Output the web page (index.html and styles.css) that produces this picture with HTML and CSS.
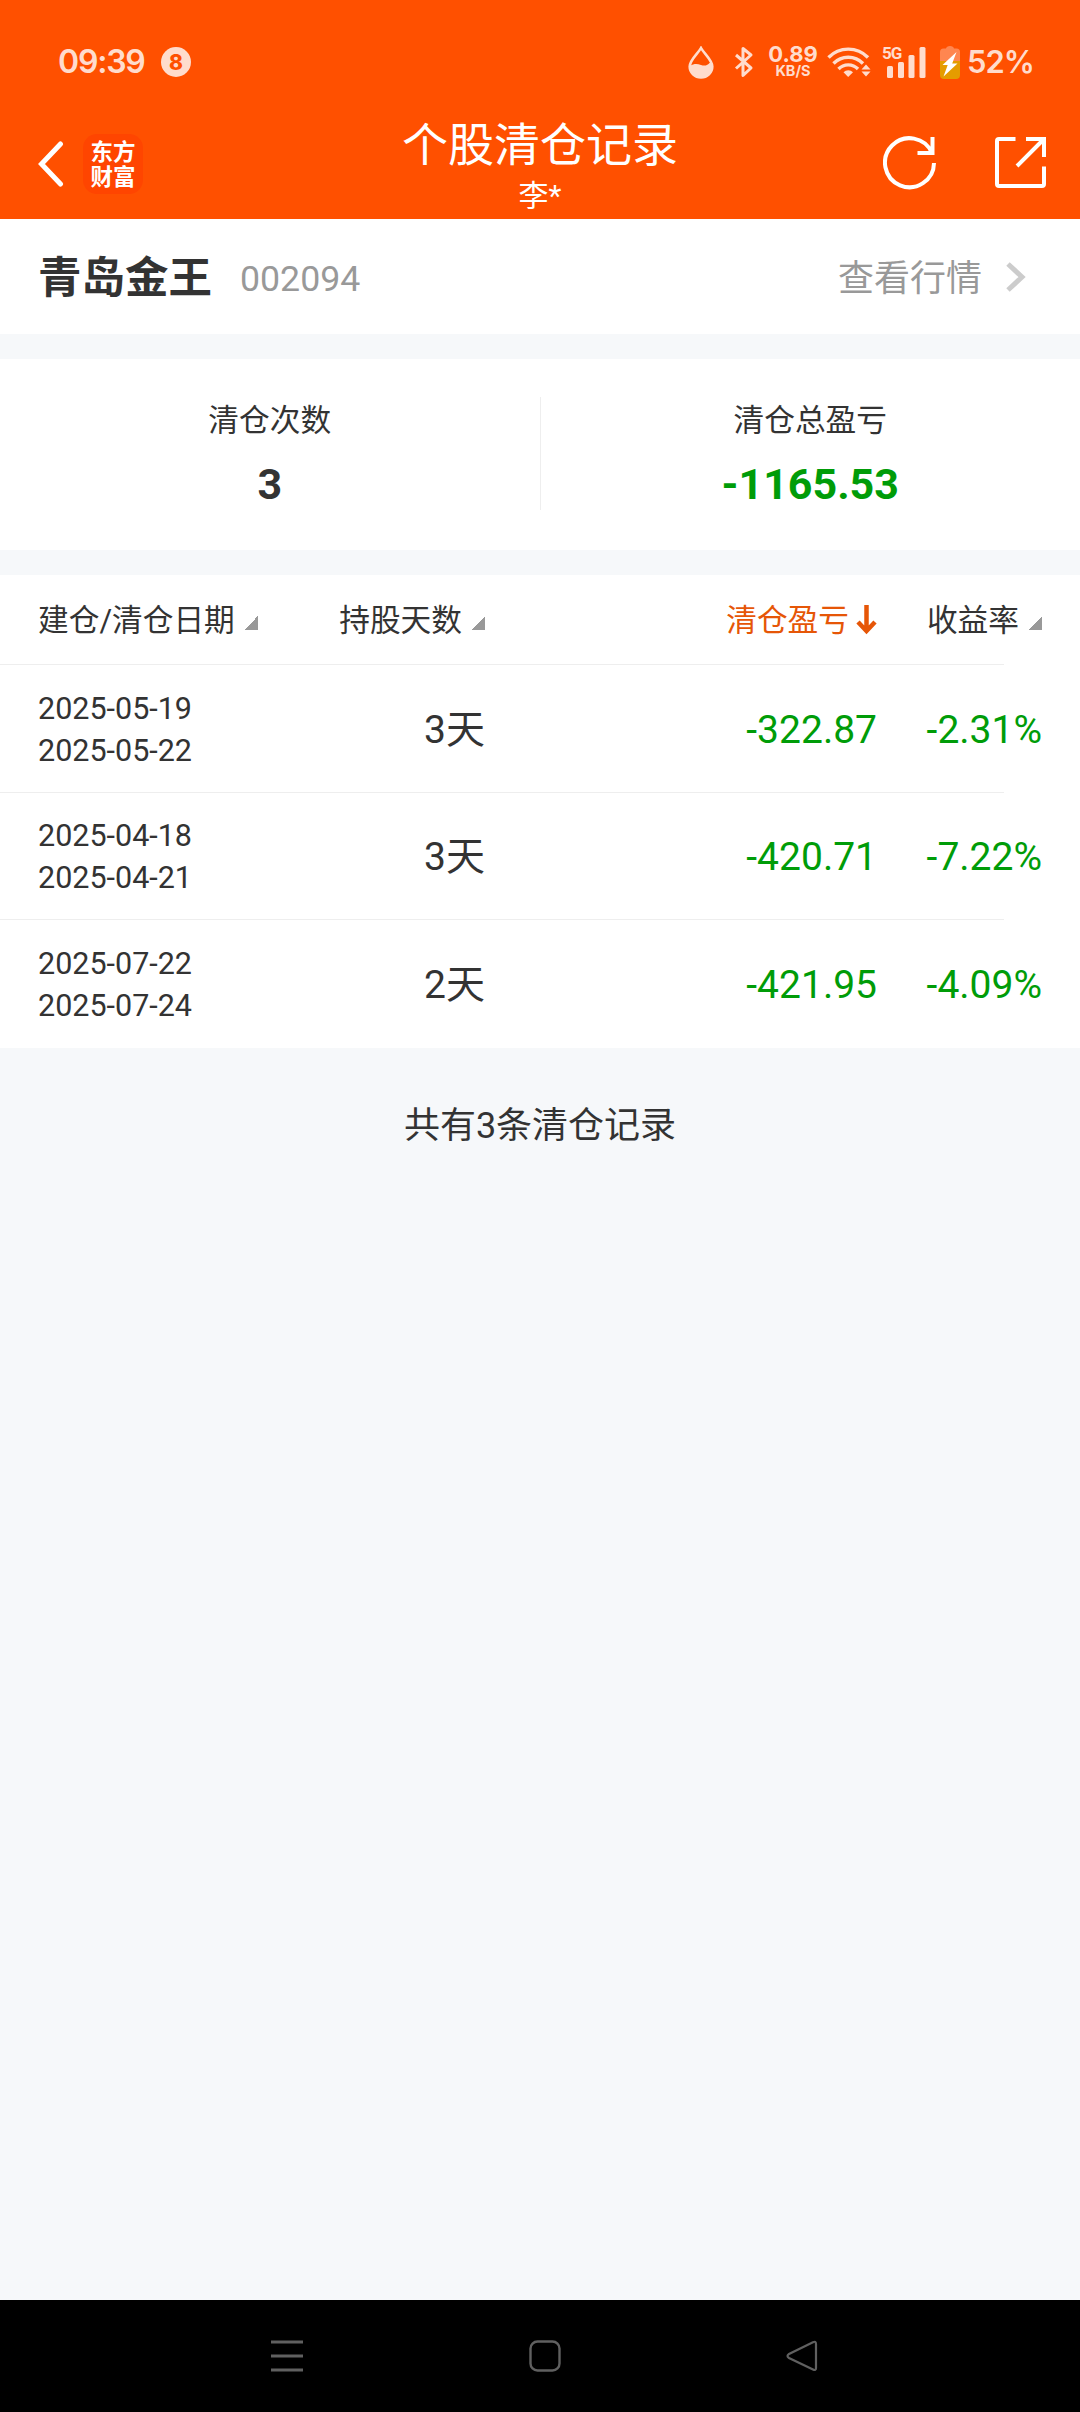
FILE: index.html
```
<!DOCTYPE html>
<html lang="zh-CN">
<head>
    <meta charset="UTF-8">
    <meta name="viewport" content="width=device-width, initial-scale=1.0">
    <title>个股清仓记录</title>
    <link rel="stylesheet" href="styles.css">
</head>
<body>
    <header class="top">
        <div class="status-bar">
            <span class="time">09:39</span>
            <span class="notice">8</span>
            <div class="status-icons">
                <svg class="icon-drop" width="26" height="33" viewBox="0 0 26 33">
                    <path d="M13 2C10 7.500 1.700 14 1.700 20.500a11.300 11 0 0 0 22.600 0C24.300 14 16 7.500 13 2z" fill="none" stroke="currentColor" stroke-width="2.600"/>
                    <path d="M2 20c4-2.500 7-2.500 11-1s7 0 8.500-2h2.800v4a11.300 11 0 0 1-22.600 0z" fill="currentColor"/>
                </svg>
                <svg class="icon-bluetooth" width="20" height="32" viewBox="0 0 20 32">
                    <path d="M2 9l15 13-8 7.500V2.500L17 9 2 22.500" fill="none" stroke="currentColor" stroke-width="3" stroke-linejoin="round"/>
                </svg>
                <div class="speed">
                    <span class="speed-num">0.89</span>
                    <span class="speed-unit">KB/S</span>
                </div>
                <svg class="icon-wifi" width="44" height="32" viewBox="0 0 44 32">
                    <g fill="none" stroke="currentColor" stroke-width="3.400">
                        <path d="M1.500 11.500a27.500 27.500 0 0 1 39.500 0"/>
                        <path d="M6.500 17.500a20.500 20.500 0 0 1 29.500 0"/>
                        <path d="M11.500 23a13.500 13.500 0 0 1 19.500 0"/>
                    </g>
                    <path d="M16.500 26.200a7 7 0 0 1 9.500 0L21.200 31z" fill="currentColor"/>
                    <path d="M34.500 23.500L39 18.500l4.500 5zM34.500 25.500h9L39 30.500z" fill="currentColor"/>
                </svg>
                <div class="signal">
                    <svg width="44" height="32" viewBox="0 0 44 32">
                        <g fill="currentColor">
                            <rect x="5" y="20" width="6" height="12" rx="1.500"/>
                            <rect x="16" y="16" width="6" height="16" rx="1.500"/>
                            <rect x="26.500" y="9" width="6" height="23" rx="1.500"/>
                            <rect x="37.500" y="1" width="6" height="31" rx="1.500"/>
                        </g>
                    </svg>
                    <span class="signal-type">5G</span>
                </div>
                <svg class="icon-battery" width="20" height="34" viewBox="0 0 20 34">
                    <path d="M6 3.500Q6.500 1 10 1t4 2.500h2.500Q20 3.500 20 7v9H0V7q0-3.500 3.500-3.500z" fill="#ff8650"/>
                    <path d="M0 16h20v14q0 4-4 4H4q-4 0-4-4z" fill="#e59c00"/>
                    <path d="M16.500 7L2.500 20h5.200L3.500 31.500 17.500 18.500h-5.300z" fill="#fff"/>
                </svg>
                <span class="battery-num">52%</span>
            </div>
        </div>
        <div class="nav-bar">
            <div class="nav-left">
                <svg class="icon-back" width="26" height="46" viewBox="0 0 26 46">
                    <path d="M22.500 3L3.500 23l19 20" fill="none" stroke="#fff" stroke-width="5" stroke-linecap="round"/>
                </svg>
                <div class="logo">东方<br>财富</div>
            </div>
            <div class="title">
                <h1>个股清仓记录</h1>
                <p>李*</p>
            </div>
            <div class="nav-right">
                <svg width="54" height="54" viewBox="0 0 54 54">
                    <path d="M51 27A24.500 24.500 0 1 1 49 17M34.500 17H49.500V1" fill="none" stroke="#fff" stroke-width="4"/>
                </svg>
                <svg width="52" height="52" viewBox="0 0 52 52">
                    <path d="M20.500 2H4Q2 2 2 4v43q0 2 2 2h43q2 0 2-2V29.500M31 2h18v18M49 2L22 29" fill="none" stroke="#fff" stroke-width="4"/>
                </svg>
            </div>
        </div>
    </header>

    <section class="stock">
        <span class="stock-name">青岛金王</span>
        <span class="stock-code">002094</span>
        <a class="quote-link">查看行情
            <svg width="20" height="30" viewBox="0 0 20 30">
                <path d="M2 2l14 13L2 28" fill="none" stroke="#ccc" stroke-width="5"/>
            </svg>
        </a>
    </section>

    <section class="summary">
        <div class="summary-item">
            <div class="label">清仓次数</div>
            <div class="value">3</div>
        </div>
        <div class="summary-item">
            <div class="label">清仓总盈亏</div>
            <div class="value green">-1165.53</div>
        </div>
    </section>

    <section class="records">
        <div class="row head">
            <div class="col-date">建仓/清仓日期<i class="sort"></i></div>
            <div class="col-days">持股天数<i class="sort"></i></div>
            <div class="col-profit active">清仓盈亏<svg width="21" height="30" viewBox="0 0 21 30">
                <path d="M10.500 0v26M2 17l8.500 9 8.500-9" fill="none" stroke="currentColor" stroke-width="4.500"/>
            </svg></div>
            <div class="col-rate">收益率<i class="sort"></i></div>
        </div>
        <div class="row">
            <div class="col-date">2025-05-19<br>2025-05-22</div>
            <div class="col-days">3天</div>
            <div class="col-profit green">-322.87</div>
            <div class="col-rate green">-2.31%</div>
        </div>
        <div class="row">
            <div class="col-date">2025-04-18<br>2025-04-21</div>
            <div class="col-days">3天</div>
            <div class="col-profit green">-420.71</div>
            <div class="col-rate green">-7.22%</div>
        </div>
        <div class="row">
            <div class="col-date">2025-07-22<br>2025-07-24</div>
            <div class="col-days">2天</div>
            <div class="col-profit green">-421.95</div>
            <div class="col-rate green">-4.09%</div>
        </div>
    </section>

    <p class="total">共有3条清仓记录</p>

    <footer class="system-nav">
        <svg width="32" height="32" viewBox="0 0 32 32">
            <path d="M0 2h32M0 16h32M0 30h32" stroke="currentColor" stroke-width="3"/>
        </svg>
        <svg width="32" height="32" viewBox="0 0 32 32">
            <rect x="1.500" y="1.500" width="29" height="29" rx="7" fill="none" stroke="currentColor" stroke-width="2.400"/>
        </svg>
        <svg width="32" height="32" viewBox="0 0 32 32">
            <path d="M27 2.200Q30 .8 30 4v24q0 3-3 1.500L3 18q-3-2 0-4z" fill="none" stroke="currentColor" stroke-width="2.200"/>
        </svg>
    </footer>
</body>
</html>
```

FILE: styles.css
```
* {
    margin: 0;
    padding: 0;
    box-sizing: border-box;
}

body {
    display: flex;
    flex-direction: column;
    height: 2412px;
    background: #f6f8fa;
    color: #333;
    font-family: Roboto, "Noto Sans CJK SC", sans-serif;
}

svg {
    display: block;
    flex: none;
}

.green {
    color: #009c08;
}

/* header */
.top {
    height: 219px;
    background: #ff5000;
    color: #fff;
}

.status-bar {
    display: flex;
    align-items: center;
    height: 110px;
    padding: 14px 47px 0 58px;
    color: #ffdccd;
    font-family: Inter, sans-serif;
}

.time {
    width: 103px;
    font-size: 32px;
    font-weight: 600;
    line-height: 40px;
    letter-spacing: -1.200px;
}

.notice {
    width: 30px;
    height: 30px;
    border-radius: 50%;
    background: #ffdccd;
    color: #ff5000;
    font-size: 21px;
    font-weight: 800;
    line-height: 31px;
    text-align: center;
}

.status-icons {
    display: flex;
    align-items: center;
    margin-left: auto;
}

.icon-drop {
    margin-left: -1px;
}

.icon-bluetooth {
    margin-left: 20px;
}

.speed {
    display: flex;
    flex-direction: column;
    align-items: center;
    width: 50px;
    margin: -2px 0 0 14px;
    font-weight: 700;
}

.speed-num {
    font-size: 22px;
    line-height: 19px;
}

.speed-unit {
    font-size: 14.500px;
    line-height: 14px;
}

.icon-wifi {
    margin-left: 9px;
}

.signal {
    position: relative;
    margin-left: 11px;
}

.signal-type {
    position: absolute;
    left: 0;
    top: 0;
    font-family: Roboto, sans-serif;
    font-size: 17px;
    font-weight: 700;
    line-height: 14px;
    letter-spacing: -1px;
}

.icon-battery {
    margin-left: 14px;
}

.battery-num {
    width: 66px;
    margin-left: 7px;
    font-size: 31px;
    font-weight: 600;
    line-height: 40px;
    letter-spacing: -1px;
}

.nav-bar {
    display: grid;
    grid-template-columns: 1fr auto 1fr;
    height: 109px;
    padding: 0 33px;
}

.nav-left {
    display: flex;
    align-items: center;
    height: 108px;
    padding-left: 5px;
}

.logo {
    width: 60px;
    height: 60px;
    margin-left: 19px;
    padding-top: 4px;
    border-radius: 14px;
    background: #ff4500;
    font-family: "Noto Sans CJK SC", sans-serif;
    font-size: 22.500px;
    font-weight: 700;
    line-height: 25px;
    text-align: center;
}

.title {
    padding-top: 8px;
    text-align: center;
}

.title h1 {
    font-size: 46px;
    font-weight: 400;
    line-height: 54px;
}

.title p {
    font-size: 30px;
    line-height: 48px;
}

.nav-right {
    display: flex;
    align-items: center;
    justify-content: flex-end;
    gap: 58px;
    height: 106px;
}

/* stock */
.stock {
    display: flex;
    align-items: center;
    height: 115px;
    padding: 4px 54px 0 38px;
    background: #fff;
    line-height: 60px;
}

.stock-name {
    font-size: 43.500px;
    font-weight: 700;
}

.stock-code {
    margin-left: 28px;
    color: #999;
    font-size: 35.700px;
}

.quote-link {
    display: flex;
    align-items: center;
    gap: 24px;
    margin-left: auto;
    color: #999;
    font-size: 36px;
}

.quote-link svg {
    margin-top: -4px;
}

/* totals */
.summary {
    display: flex;
    height: 191px;
    margin-top: 25px;
    padding: 38px 0 40px;
    background: #fff;
}

.summary-item {
    flex: 1;
    text-align: center;
}

.summary-item + .summary-item {
    border-left: 1px solid #eee;
}

.label {
    padding-top: 2px;
    font-size: 30.700px;
    line-height: 44px;
}

.value {
    font-size: 43px;
    font-weight: 700;
    line-height: 60px;
    margin-top: 11px;
}

/* table */
.records {
    margin-top: 25px;
    background: #fff;
}

.row {
    display: grid;
    grid-template-columns: 221px 226px 392px 165px;
    align-items: center;
    height: 127.500px;
    padding: 2px 0 0 38px;
    background: linear-gradient(#eee, #eee) left bottom / 1004px 1px no-repeat;
    font-size: 39px;
    line-height: 42px;
}

.row:last-child {
    background: none;
}

.row.head {
    height: 90px;
    font-size: 30.700px;
}

.row.head > div {
    display: flex;
    align-items: center;
    font-size: 30.700px;
    white-space: nowrap;
}

.col-date {
    font-size: 30.500px;
}

.col-days,
.col-profit,
.col-rate {
    justify-content: flex-end;
    text-align: right;
}

.active {
    gap: 7px;
    color: #e65607;
}

.active svg {
    margin-top: -2px;
}

.sort {
    width: 14px;
    height: 14px;
    margin: 3px 0 0 9px;
    background: linear-gradient(135deg, transparent 50%, #999 50%);
}

.total {
    margin-top: 51px;
    font-size: 36px;
    line-height: 54px;
    text-align: center;
}

/* android buttons */
.system-nav {
    display: flex;
    align-items: center;
    justify-content: space-between;
    height: 112px;
    margin-top: auto;
    padding: 0 262px 0 271px;
    background: #000;
    color: #606060;
}
```
